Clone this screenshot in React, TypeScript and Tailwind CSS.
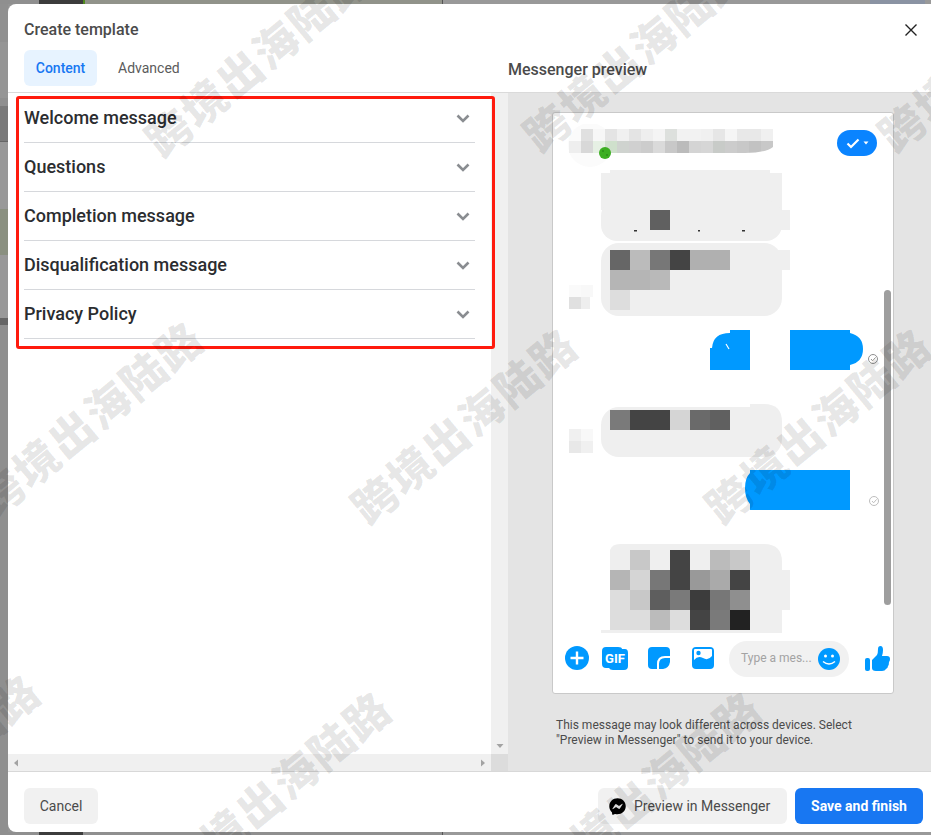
import React from "react";
import { FaFacebookMessenger } from "react-icons/fa";

const BLUE = "#0099ff";

function Cells({ x, y, colors, size = 20 }: { x: number; y: number; colors: string[]; size?: number }) {
  return (
    <>
      {colors.map((c, i) => (
        <rect key={i} x={x + i * size} y={y} width={size} height={size} fill={c} />
      ))}
    </>
  );
}

function Art({ y, h, w = 340, children, className }: { y: number; h: number; w?: number; children: React.ReactNode; className?: string }) {
  return (
    <svg width={w} height={h} viewBox={`553 ${y} ${w} ${h}`} className={"block shrink-0 " + (className ?? "")}>
      {children}
    </svg>
  );
}

function Tick({ x, y, color }: { x: number; y: number; color: string }) {
  return (
    <g fill="none" stroke={color} strokeWidth="1">
      <circle cx={x} cy={y} r="4.5" />
      <path d={`M${x - 2} ${y} l1.6 1.8 l3 -3.4`} />
    </g>
  );
}

function Chevron() {
  return (
    <svg width="14" height="9" viewBox="0 0 14 9" className="mr-[5px]">
      <path d="M1.5 1.5 L7 7 L12.5 1.5" fill="none" stroke="#8a8d91" strokeWidth="2.6" />
    </svg>
  );
}

function Row({ label }: { label: string }) {
  return (
    <div className="flex h-[49px] items-center justify-between border-b border-[#d6d8dc]">
      <span className="text-[18px] leading-[22px] font-medium text-[#2b2d30]">{label}</span>
      <Chevron />
    </div>
  );
}

function Triangle({ d }: { d: string }) {
  return (
    <svg width="8" height="8" viewBox="0 0 8 8">
      <path d={d} fill="#a3a3a3" />
    </svg>
  );
}

const marks = [
  "left-[257px] top-[57px]",
  "left-[635px] top-[52px]",
  "left-[990px] top-[52px]",
  "left-[89px] top-[417px]",
  "left-[463px] top-[424px]",
  "left-[817px] top-[424px]",
  "left-[-74px] top-[770px]",
  "left-[277px] top-[787px]",
  "left-[647px] top-[787px]",
];

export default function App() {
  return (
    <div className="relative flex h-[835px] w-[931px] flex-col overflow-hidden bg-[#949494] font-['Roboto',sans-serif]">
      {/* page behind the dialog, top edge */}
      <div className="flex h-[4px] shrink-0">
        <div className="w-[39px] bg-[#8f8f8f]" />
        <div className="w-[44px] bg-[#3c3c3c]" />
        <div className="w-[2px] bg-[#4f8a1e]" />
        <div className="w-[357px] bg-[#91938a]" />
        <div className="w-px bg-[#555]" />
        <div className="w-[427px] bg-[#999]" />
        <div className="w-[55px] bg-[#8a93a3]" />
        <div className="flex-1 bg-[#999]" />
      </div>

      <div className="flex min-h-0 flex-1">
        <div className="flex w-[8px] shrink-0 flex-col">
          <div className="h-[38px] bg-[#909090]" />
          <div className="h-[56px] bg-[#959595]" />
          <div className="h-[8px] bg-[#8f8f8f]" />
          <div className="h-[35px] bg-[#7a7a7a]" />
          <div className="h-px bg-[#666]" />
          <div className="h-[67px] bg-[#999]" />
          <div className="h-[46px] bg-[#8a9080]" />
          <div className="h-[63px] bg-[#999]" />
          <div className="h-[7px] bg-[#666]" />
          <div className="flex-1 bg-[#8f8f8f]" />
        </div>

        <div className="flex min-w-0 flex-1 flex-col rounded-l-[8px] bg-white">
          {/* header */}
          <div className="flex h-[89px] shrink-0 border-b border-[#dadada]">
            <div className="w-[500px] shrink-0 pl-4 pt-[17px]">
              <div className="text-[16px] leading-[18px] font-medium text-[#4b4b4b]">Create template</div>
              <div className="mt-[11px] flex items-center">
                <div className="flex h-[36px] w-[73px] items-center justify-center rounded-[6px] bg-[#e7f3ff] text-[14px] font-medium text-[#1877f2]">
                  Content
                </div>
                <div className="ml-[21px] text-[14px] text-[#5b5b5b]">Advanced</div>
              </div>
            </div>
            <div className="flex flex-1 flex-col">
              <div className="mr-[13px] mt-[19px] self-end">
                <svg width="14" height="14" viewBox="0 0 14 14" className="block">
                  <path d="M1.5 1.5 L12.5 12.5 M12.5 1.5 L1.5 12.5" stroke="#222" strokeWidth="1.4" fill="none" />
                </svg>
              </div>
              <div className="mt-[23px] text-[16px] leading-[20px] font-medium text-[#4b4b4b]">Messenger preview</div>
            </div>
          </div>

          {/* body */}
          <div className="flex h-[678px] shrink-0">
            <div className="flex w-[500px] shrink-0 flex-col">
              <div className="flex min-h-0 flex-1">
                <div className="flex-1 px-4 pt-px">
                  <Row label="Welcome message" />
                  <Row label="Questions" />
                  <Row label="Completion message" />
                  <Row label="Disqualification message" />
                  <Row label="Privacy Policy" />
                </div>
                <div className="flex w-[17px] flex-col items-center justify-end bg-[#f0f0f0] pb-[4px]">
                  <Triangle d="M0.5 2 H7.5 L4 6 Z" />
                </div>
              </div>
              <div className="flex h-[17px] shrink-0">
                <div className="flex flex-1 items-center justify-between bg-[#f0f0f0] px-[4px]">
                  <Triangle d="M6 0.5 V7.5 L2 4 Z" />
                  <Triangle d="M2 0.5 V7.5 L6 4 Z" />
                </div>
                <div className="w-[17px] bg-[#dcdcdc]" />
              </div>
            </div>

            <div className="flex-1 bg-[#e4e4e4] pl-[44px] pt-[19px]">
              <div className="relative flex h-[582px] w-[342px] flex-col rounded-[3px] border border-[#c9c9c9] bg-white">
                <div className="h-[520px] shrink-0 overflow-hidden">
                  <div className="mt-[11px] flex">
                    <Art y={124} h={46} w={225}>
                      <circle cx="590" cy="145" r="22" fill="#fbfbfb" />
                      <Cells x={581} y={129} size={12} colors={["#e0e0e0", "#f7f7f7", "#e4e4e4", "#f0f0f0", "#e4e4e4", "#eeeeee", "#f4f4f4", "#dde0dd", "#f2f2f2", "#f2f2f2", "#f0f0f0", "#e6e6e6", "#f5f5f5", "#e8e8e8", "#e8e8e8", "#f0f0f0"]} />
                      <Cells x={569} y={141} size={12} colors={["#eeeeee", "#d8d8d8", "#e6f0e4", "#cfe0cc", "#cfd3cf", "#d0d0d0", "#cccccc", "#dadada", "#c8c8c8", "#bbbbbb", "#d4d4d4", "#d6d6d6", "#c8cbc8", "#cccccc", "#c8c8c8", "#c2c2c2", "#c8c8c8"]} />
                      <path d="M745 153 H773 V147 Q765 153 745 153 Z" fill="#fff" />
                      <circle cx="605" cy="153" r="6" fill="#3cae22" />
                      <circle cx="603" cy="151" r="0.8" fill="#1f7a10" />
                      <circle cx="607" cy="155" r="0.8" fill="#1f7a10" />
                    </Art>
                    <div className="ml-auto mr-[16px] mt-[6px] flex h-[26px] w-[40px] items-center justify-center gap-[3px] rounded-full bg-[#0a84ff]">
                      <svg width="14" height="11" viewBox="0 0 14 11">
                        <path d="M1.5 5.5 L5 9 L12.5 1.5" fill="none" stroke="#fff" strokeWidth="2.2" />
                      </svg>
                      <svg width="6" height="4" viewBox="0 0 6 4">
                        <path d="M0.5 0.5 H5.5 L3 3.5 Z" fill="#fff" />
                      </svg>
                    </div>
                  </div>

                  <Art y={170} h={73}>
                    <rect x="610" y="170" width="160" height="10" fill="#efefef" />
                    <rect x="601" y="173" width="181" height="37" fill="#efefef" />
                    <rect x="610" y="210" width="180" height="20" fill="#efefef" />
                    <rect x="601" y="200" width="181" height="41" rx="16" fill="#efefef" />
                    <rect x="650" y="210" width="20" height="20" fill="#606060" />
                    <rect x="634" y="230" width="3" height="1.5" fill="#333" />
                    <rect x="698" y="230" width="2" height="1.5" fill="#333" />
                    <rect x="742" y="230" width="3" height="1.5" fill="#333" />
                  </Art>

                  <Art y={243} h={73}>
                    <rect x="601" y="243" width="181" height="73" rx="18" fill="#efefef" />
                    <rect x="770" y="250" width="20" height="20" fill="#efefef" />
                    <Cells x={610} y={250} colors={["#666666", "#bbbbbb", "#777777", "#444444", "#b0b0b0", "#b0b0b0"]} />
                    <Cells x={610} y={270} colors={["#b5b5b5", "#b5b5b5", "#b9b9b9"]} />
                    <Cells x={610} y={290} colors={["#dddddd"]} />
                    <Cells x={569} y={285} size={12} colors={["#fafafa", "#f8f8f8"]} />
                    <rect x="569" y="297" width="12" height="12" fill="#e0e0e0" />
                    <rect x="581" y="297" width="9" height="12" fill="#eeeeee" />
                  </Art>

                  <Art y={330} h={40} className="mt-[14px]">
                    <path d="M712 370 H710 V348 H712 Q713 333 730 333 V330 H750 V370 Z" fill={BLUE} />
                    <path d="M790 330 H850 V333 Q863 336 863 349 Q863 362 850 365 V370 H790 Z" fill={BLUE} />
                    <path d="M726 344 L729 349" stroke="#fff" strokeWidth="1.2" />
                    <Tick x={873} y={359} color="#8f8f8f" />
                  </Art>

                  <Art y={404} h={53} className="mt-[34px]">
                    <rect x="601" y="407" width="181" height="50" rx="18" fill="#efefef" />
                    <path d="M750 404 H764 Q782 404 782 422 V430 H750 Z" fill="#efefef" />
                    <Cells x={610} y={410} colors={["#7a7a7a", "#444444", "#444444", "#d5d5d5", "#6a6a6a", "#606060"]} />
                    <Cells x={569} y={429} size={12} colors={["#f0f0f0", "#f8f8f8"]} />
                    <Cells x={569} y={441} size={12} colors={["#e8e8e8", "#f0f0f0"]} />
                  </Art>

                  <Art y={470} h={40} className="mt-[13px]">
                    <path d="M750 470 H850 V510 H750 V504 Q745 498 745 488 Q745 478 750 473 Z" fill={BLUE} />
                    <Tick x={874} y={501} color="#bdbdbd" />
                  </Art>

                  <Art y={544} h={89} className="mt-[34px]">
                    <path d="M620 544 H764 Q782 544 782 562 V570 H790 V610 H782 V633 H601 V630 H610 V550 Q612 544 620 544 Z" fill="#efefef" />
                    <Cells x={610} y={550} colors={["#eeeeee", "#c8c8c8", "#efefef", "#444444", "#efefef", "#bbbbbb", "#c8c8c8"]} />
                    <Cells x={610} y={570} colors={["#b5b5b5", "#d5d5d5", "#777777", "#444444", "#999999", "#aaaaaa", "#444444"]} />
                    <Cells x={610} y={590} colors={["#dddddd", "#c8c8c8", "#5e5e5e", "#7a7a7a", "#3c3c3c", "#777777", "#8f8f8f"]} />
                    <Cells x={610} y={610} colors={["#dddddd", "#dddddd", "#bbbbbb", "#dddddd", "#444444", "#7a7a7a", "#222222"]} />
                  </Art>
                </div>

                {/* composer */}
                <div className="flex flex-1 items-center pb-[10px] pl-[12px]">
                  <svg width="24" height="24" viewBox="0 0 24 24" className="shrink-0">
                    <circle cx="12" cy="12" r="12" fill={BLUE} />
                    <path d="M12 5.5 V18.5 M5.5 12 H18.5" stroke="#fff" strokeWidth="2.4" />
                  </svg>
                  <svg width="26" height="23" viewBox="0 0 26 23" className="ml-[13px] shrink-0">
                    <path d="M4 0 H16 Q20 0 20 2 H23 Q26 2 26 6 V19 Q26 23 22 23 H11 Q8 23 7 21 H4 Q0 21 0 17 V4 Q0 0 4 0 Z" fill={BLUE} />
                    <text x="13" y="16" textAnchor="middle" fontSize="13" fontWeight="700" fill="#fff" fontFamily="Roboto, sans-serif">GIF</text>
                  </svg>
                  <svg width="22" height="22" viewBox="0 0 22 22" className="ml-[20px] shrink-0">
                    <rect width="22" height="22" rx="4" fill={BLUE} />
                    <path d="M22 10 H17 Q10 10 10 17 V22" fill="none" stroke="#fff" strokeWidth="2" />
                    <path d="M22 15 V22 H15 Q21 21 22 15 Z" fill="#fff" />
                  </svg>
                  <svg width="22" height="22" viewBox="0 0 22 22" className="ml-[22px] shrink-0">
                    <rect x="0" y="0" width="22" height="22" rx="4" fill={BLUE} />
                    <rect x="2" y="2" width="18" height="12" rx="1" fill="#fff" />
                    <circle cx="6.5" cy="6" r="2.2" fill={BLUE} />
                    <path d="M2 13 Q6 8 11 11 Q16 14 20 9 V14 H2 Z" fill={BLUE} />
                  </svg>
                  <div className="ml-[15px] mt-[2px] flex h-[36px] w-[120px] shrink-0 items-center justify-between rounded-full bg-[#f1f1f1] pl-[12px] pr-[9px]">
                    <span className="mb-[2px] text-[12px] text-[#a3a3a3]">Type a mes...</span>
                    <svg width="22" height="22" viewBox="0 0 22 22" className="shrink-0">
                      <circle cx="11" cy="11" r="11" fill={BLUE} />
                      <circle cx="7.5" cy="8" r="1.5" fill="#fff" />
                      <circle cx="14.5" cy="8" r="1.5" fill="#fff" />
                      <path d="M5 13.5 Q11 18.5 17 13.5" fill="none" stroke="#fff" strokeWidth="1.4" />
                    </svg>
                  </div>
                  <svg width="25" height="25" viewBox="0 0 25 25" className="ml-[16px] shrink-0">
                    <rect x="0" y="12" width="5" height="13" rx="2" fill={BLUE} />
                    <path d="M7 14 L12 9 Q13 7 13 3 Q13 0 15.5 0 Q18 0 18 4 Q18 7 17 10 H22 Q25 10 25 13 Q25 15 24 16 Q24 19 23 20 Q23 22 21 23 Q20 25 17 25 H11 Q7 25 7 22 Z" fill={BLUE} />
                  </svg>
                </div>

                {/* scrollbar thumb */}
                <div className="absolute left-[331px] top-[177px] h-[315px] w-[7px] rounded-full bg-[#9e9e9e]" />
              </div>
              <p className="ml-[4px] mt-[24px] w-[320px] text-[12px] leading-[15px] text-[#4b4b4b]">
                This message may look different across devices. Select "Preview in Messenger" to send it to your device.
              </p>
            </div>
          </div>

          {/* footer */}
          <div className="flex flex-1 items-center justify-between border-t border-[#d8d8d8] pl-4 pr-[8px] pt-[8px]">
            <div className="flex h-[36px] w-[74px] items-center justify-center rounded-[6px] bg-[#f1f1f1] text-[14px] text-[#4b4b4b]">
              Cancel
            </div>
            <div className="flex items-center gap-[8px]">
              <div className="flex h-[36px] w-[189px] items-center gap-[8px] rounded-[6px] bg-[#f1f1f1] pl-[11px] text-[14px] text-[#4b4b4b]">
                <FaFacebookMessenger className="h-[17px] w-[17px] text-black" />
                Preview in Messenger
              </div>
              <div className="flex h-[36px] w-[128px] items-center justify-center rounded-[6px] bg-[#1877f2] text-[14px] font-bold text-white">
                Save and finish
              </div>
            </div>
          </div>
        </div>
      </div>

      {/* page behind the dialog, bottom edge */}
      <div className="flex h-[3px] shrink-0">
        <div className="w-[39px] bg-[#8f8f8f]" />
        <div className="w-[44px] bg-[#3c3c3c]" />
        <div className="w-[359px] bg-[#8f8f8f]" />
        <div className="w-px bg-[#555]" />
        <div className="flex-1 bg-[#999]" />
      </div>

      {/* annotation */}
      <div className="pointer-events-none absolute left-[16px] top-[96px] h-[253px] w-[479px] rounded-[3px] border-[3px] border-[#ff1a0d]" />

      {/* watermark */}
      {marks.map((m) => (
        <div
          key={m}
          className={
            "pointer-events-none absolute -translate-x-1/2 -translate-y-1/2 rotate-[-39.5deg] whitespace-nowrap font-['Noto_Sans_CJK_SC',sans-serif] text-[44px] leading-none font-black tracking-[2px] text-black/10 " +
            m
          }
        >
          跨境出海陆路
        </div>
      ))}
    </div>
  );
}
